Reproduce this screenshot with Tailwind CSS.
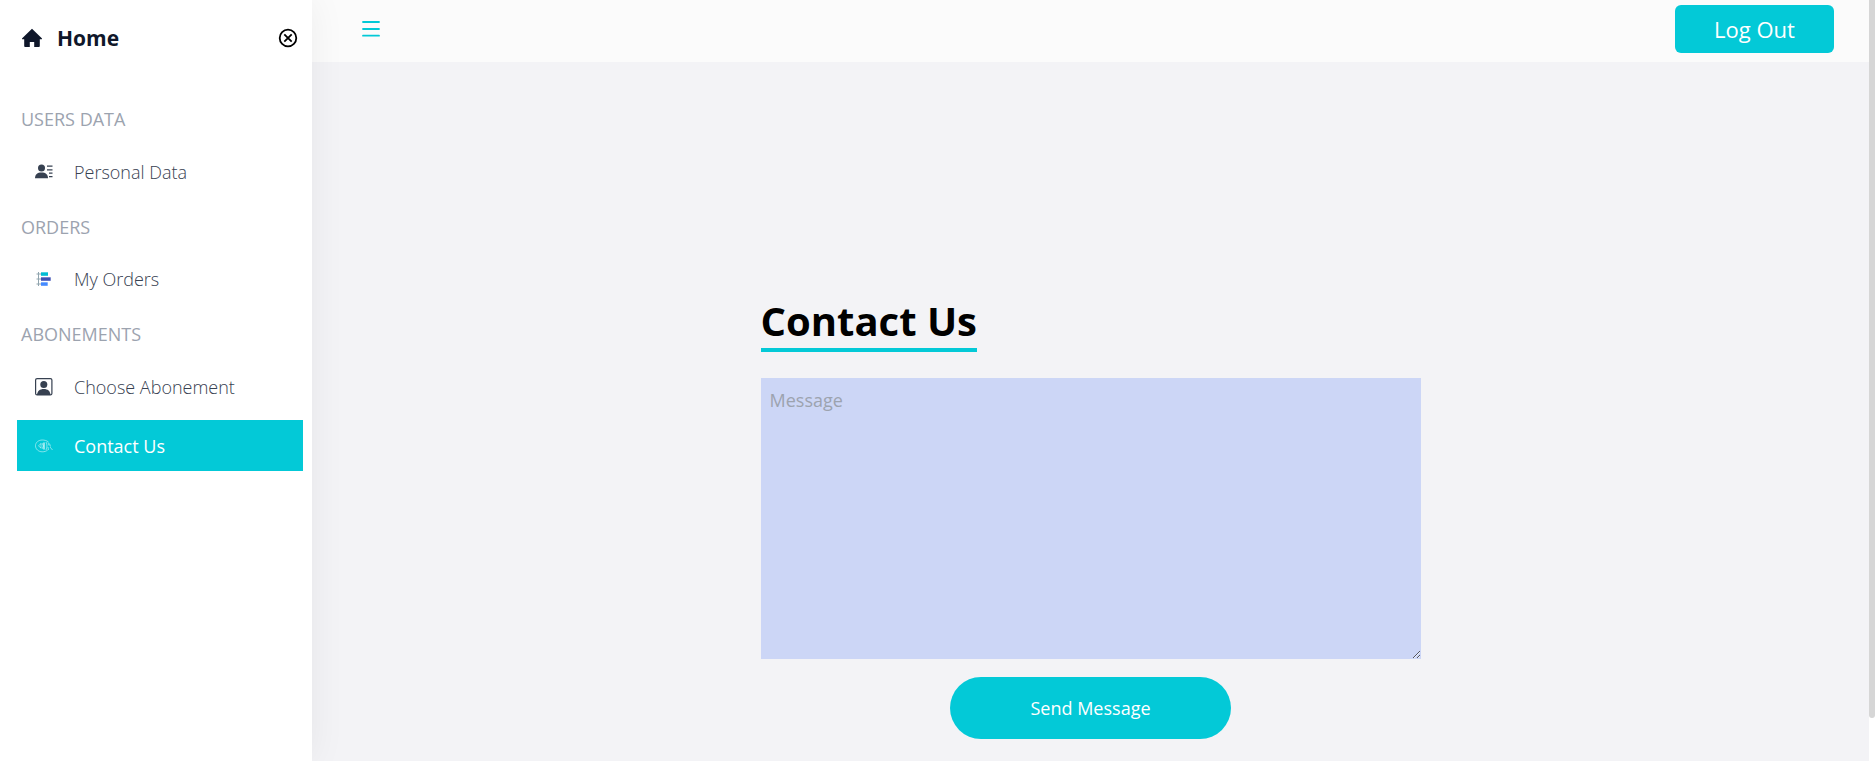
<!DOCTYPE html>
<html lang="en">
<head>
<meta charset="utf-8">
<title>Contact Us</title>
<script src="https://cdn.jsdelivr.net/npm/@tailwindcss/browser@4"></script>
</head>
<body class="flex min-h-screen bg-[#f3f3f6] font-['Open_Sans',sans-serif] text-lg text-black">
<aside class="z-10 w-[312px] shrink-0 bg-white pl-[17px] pr-[9px] shadow-[0_0_35px_rgba(0,0,0,0.06)]">
  <div class="flex h-[76px] items-center justify-between pl-[5px] pr-[5px]">
    <a href="#" class="flex items-center gap-[15px] text-[21px] leading-7 font-bold text-[#0f172a]">
      <svg class="h-5 w-5" viewBox="0 0 20 20" fill="currentColor" aria-hidden="true"><path d="M10 .8L.2 10.300c-.4.500-.2 1 .4 1H2.200V17.800c0 .8.400 1.200 1.200 1.200h4.400v-5h4.400v5h4.400c.8 0 1.200-.4 1.200-1.200v-6.500h1.600c.6 0 .8-.5.400-1z"/></svg>
      <span>Home</span>
    </a>
    <button type="button" aria-label="Close menu">
      <svg class="h-5 w-5" viewBox="0 0 20 20" fill="none" stroke="#000" stroke-width="1.800" aria-hidden="true"><circle cx="10" cy="10" r="8.300"/><path d="M6.300 6.300l7.400 7.400M13.700 6.300l-7.400 7.400"/></svg>
    </button>
  </div>
  <nav class="mt-[31px] text-[#374151]">
    <h2 class="mb-4 pl-1 leading-6 text-[#9ca3af]">USERS DATA</h2>
    <a href="#" class="flex h-[50px] items-center gap-[21px] pl-[18px] font-light">
      <svg class="h-[18px] w-[18px]" viewBox="0 0 18 18" fill="currentColor" aria-hidden="true"><circle cx="6.500" cy="5" r="3.500"/><path d="M0 15.300c0-3.800 2.400-5.800 6.500-5.800s6.500 2 6.500 5.800z"/><path d="M12 2.500h5.500v1.200H12zM12 6.200h5.500v1.200H12zM14 9.500h3.500v1.200H14zM14 13h3.500v1.200H14z"/></svg>
      <span>Personal Data</span>
    </a>
    <h2 class="mt-[18px] mb-[15px] pl-1 leading-6 text-[#9ca3af]">ORDERS</h2>
    <a href="#" class="flex h-[50px] items-center gap-[21px] pl-[18px] font-light">
      <svg class="h-[18px] w-[18px]" viewBox="0 0 18 18" aria-hidden="true"><path d="M3.500 2v14M1.500 4H6M1.500 9H6M1.500 14H6" stroke="#90a4ae" stroke-width="1" fill="none"/><path fill="#00bcd4" d="M6 2.300h7v3.500H6z"/><path fill="#3f51b5" d="M6 7.300h9.700v3.500H6z"/><path fill="#448aff" d="M6 12.300h6.700v3.500H6z"/></svg>
      <span>My Orders</span>
    </a>
    <h2 class="mt-[18px] mb-[15px] pl-1 leading-6 text-[#9ca3af]">ABONEMENTS</h2>
    <a href="#" class="flex h-[51px] items-center gap-[21px] pl-[18px] font-light">
      <svg class="h-[18px] w-[18px]" viewBox="0 0 18 18" aria-hidden="true"><rect x=".6" y=".6" width="16.300" height="16.300" rx="1.500" fill="none" stroke="currentColor" stroke-width="1.200"/><circle cx="8.800" cy="6.500" r="3.500" fill="currentColor"/><path fill="currentColor" d="M2 17c.3-4 2.800-6 6.800-6s6.400 2 6.700 6z"/></svg>
      <span>Choose Abonement</span>
    </a>
    <a href="#" aria-current="page" class="mt-2 flex h-[51px] items-center gap-[21px] bg-[#03c9d7] pl-[18px] text-white">
      <svg class="h-[18px] w-[18px]" viewBox="0 0 18 18" fill="none" stroke="currentColor" stroke-width=".5" aria-hidden="true"><path d="M13.500 5C11.500 3.500 9.500 3 7.200 3 3.500 3 .5 5.500.5 8.800s3 6 6.700 6c2.300 0 4-.6 5.500-1.800"/><path d="M3.500 8.800l2.500-2.300v4.600zM7 6l1.300 3L7 12"/><path d="M9 5.500v7" stroke-width="1.100"/><path d="M11 5c1.300 2.500 1.300 5.500 0 8M13 5.500l1 3M14.500 6.500l1 3M13 10l.5 3M15 10l2.500 3"/></svg>
      <span>Contact Us</span>
    </a>
  </nav>
</aside>
<div class="flex min-w-0 flex-1 flex-col">
  <header class="flex h-[62px] items-start justify-between bg-[#fbfbfb] pt-[5px] pr-[35px] pl-[49px]">
    <button type="button" aria-label="Toggle menu" class="mt-[13px] text-[#03c9d7]">
      <svg class="h-[22px] w-5" viewBox="0 0 20 22" fill="none" stroke="currentColor" stroke-width="1.800" stroke-linecap="round" aria-hidden="true"><path d="M2 4h16M2 11h16M2 17.700h16"/></svg>
    </button>
    <button type="button" class="h-12 w-[159px] rounded-md bg-[#03c9d7] text-[22px] leading-7 text-white">Log Out</button>
  </header>
  <main class="flex flex-1 flex-col items-center justify-end px-6 pb-[22px]">
    <form class="flex w-full max-w-[660px] flex-col items-center">
      <h1 class="mb-[26px] self-start border-b-4 border-[#03c9d7] pt-1 text-[40px] leading-[54px] font-bold"><label for="message">Contact Us</label></h1>
      <textarea id="message" placeholder="Message" class="h-[281px] w-full resize bg-[#ccd6f6] px-[9px] py-2 leading-7 placeholder:text-[#9ca3af]"></textarea>
      <button type="submit" class="mt-[18px] h-[62px] w-[281px] rounded-full bg-[#03c9d7] text-white">Send Message</button>
    </form>
  </main>
</div>
<div class="w-[6px] shrink-0 bg-white" aria-hidden="true"><div class="h-[718px] rounded-b-full bg-[#d6d6d6]"></div></div>
</body>
</html>
